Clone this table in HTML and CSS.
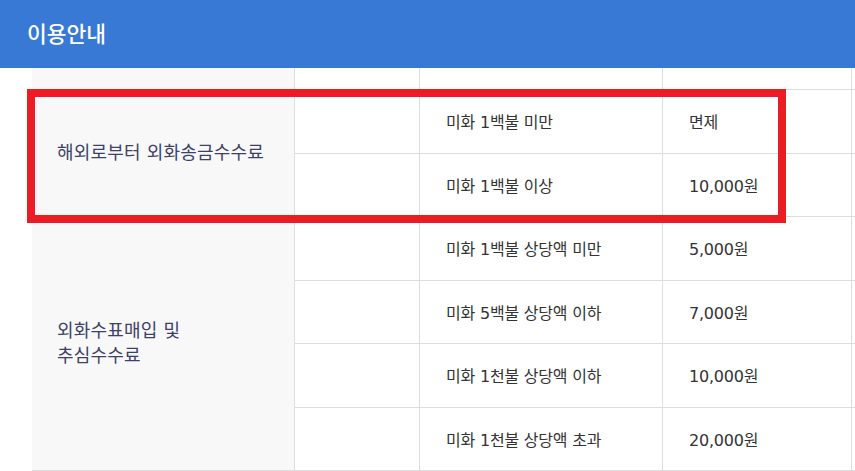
FILE: index.html
```html
<!DOCTYPE html>
<html lang="ko">
<head>
<meta charset="utf-8">
<title>이용안내</title>
<link rel="stylesheet" href="styles.css">
</head>
<body>
<header class="topbar"><h1 class="title">이용안내</h1></header>
<main class="content">
  <table class="fee-table">
    <colgroup>
      <col class="c1"><col class="c2"><col class="c3"><col class="c4"><col class="c5">
    </colgroup>
    <tbody>
      <tr class="row-partial">
        <td class="cat"></td><td></td><td></td><td></td><td></td>
      </tr>
      <tr>
        <td class="cat" rowspan="2">해외로부터 외화송금수수료</td>
        <td></td><td>미화 1백불 미만</td><td>면제</td><td></td>
      </tr>
      <tr>
        <td></td><td>미화 1백불 이상</td><td>10,000원</td><td></td>
      </tr>
      <tr>
        <td class="cat" rowspan="4">외화수표매입 및<br>추심수수료</td>
        <td></td><td>미화 1백불 상당액 미만</td><td>5,000원</td><td></td>
      </tr>
      <tr>
        <td></td><td>미화 5백불 상당액 이하</td><td>7,000원</td><td></td>
      </tr>
      <tr>
        <td></td><td>미화 1천불 상당액 이하</td><td>10,000원</td><td></td>
      </tr>
      <tr>
        <td></td><td>미화 1천불 상당액 초과</td><td>20,000원</td><td></td>
      </tr>
    </tbody>
  </table>
  <div class="highlight"></div>
</main>
</body>
</html>
```

FILE: styles.css
```css
html, body {
  margin: 0;
  padding: 0;
}
body {
  width: 855px;
  height: 471px;
  overflow: hidden;
  background: #ffffff;
  font-family: "DejaVu Sans", "Noto Sans CJK KR", sans-serif;
}
.topbar {
  height: 68px;
  background: #3779d4;
  display: flex;
  align-items: center;
  padding-left: 27px;
}
.title {
  margin: 0;
  color: #ffffff;
  font-family: "Noto Sans CJK KR", sans-serif;
  font-size: 21.5px;
  font-weight: 500;
  letter-spacing: 0;
  line-height: 1;
  padding-bottom: 2px;
}
.content {
  position: relative;
  padding-left: 32px;
  overflow: hidden;
}
.fee-table {
  border-collapse: separate;
  border-spacing: 0;
  table-layout: fixed;
  width: 900px;
}
.c1 { width: 263px; }
.c2 { width: 125px; }
.c3 { width: 243px; }
.c4 { width: 189px; }
.c5 { width: 80px; }
.fee-table td {
  box-sizing: border-box;
  height: 63.5px;
  padding: 0 0 0 26px;
  border-right: 1px solid #dddddd;
  border-bottom: 1px solid #dddddd;
  font-size: 16px;
  letter-spacing: -0.2px;
  color: #333333;
  vertical-align: middle;
  white-space: nowrap;
}
.fee-table .row-partial td {
  height: 22px;
}
.fee-table td.cat {
  background: #f8f8f8;
  color: #3d4168;
  font-size: 18px;
  letter-spacing: 0.2px;
  line-height: 25px;
  padding-left: 25px;
  padding-bottom: 2px;
}
.highlight {
  position: absolute;
  left: 27px;
  top: 21px;
  width: 759px;
  height: 134px;
  box-sizing: border-box;
  border: 8px solid #ed1c24;
  pointer-events: none;
}
```
